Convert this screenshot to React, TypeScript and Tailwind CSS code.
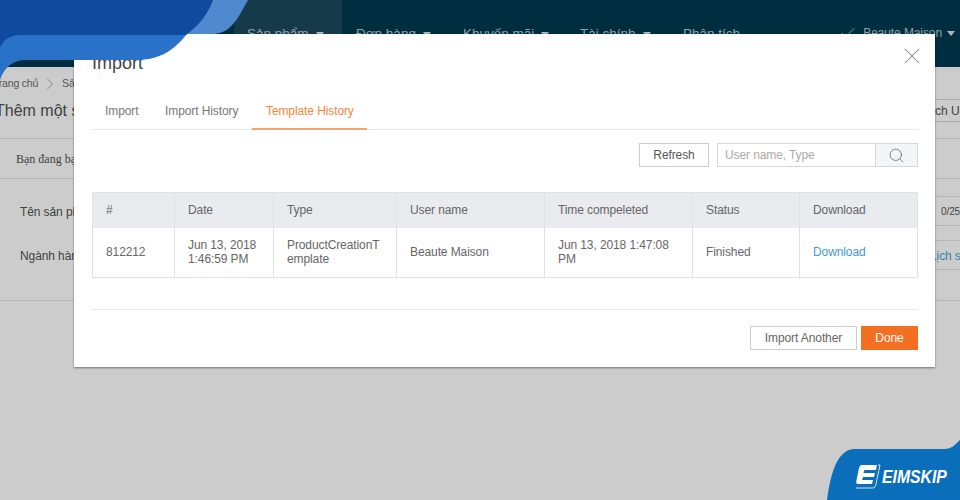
import { Check, ChevronRight, Search, X } from "lucide-react";

const font = { fontFamily: '"Liberation Sans", Arial, sans-serif' };

function NavItem({ label, caret = true, active = false, width }: { label: string; caret?: boolean; active?: boolean; width: string }) {
  return (
    <div className={`flex h-full items-start pt-[26px] text-[13.5px] leading-[15px] text-[#8fa3ad] ${width} ${active ? "bg-[#153a4a] pl-[13px]" : "pl-[14px]"}`}>
      <span>{label}</span>
      {caret && <span className="ml-[7px] mt-[6px] h-0 w-0 border-x-[4px] border-t-[5px] border-x-transparent border-t-[#a9b8bf]" />}
    </div>
  );
}

function BackgroundPage() {
  return (
    <div className="h-[500px] w-[960px] overflow-hidden bg-[#cccccc] text-[#3f3f3f]">
      <div className="flex h-[67px] bg-[#002d40]">
        <div className="w-[234px]" />
        <NavItem label="Sản phẩm" active width="w-[108px]" />
        <NavItem label="Đơn hàng" width="w-[107px]" />
        <NavItem label="Khuyến mãi" width="w-[117px]" />
        <NavItem label="Tài chính" width="w-[103px]" />
        <NavItem label="Phân tích" caret={false} width="w-[76px]" />
        <div className="ml-auto flex items-start pr-[5px] pt-[26px] text-[12px] leading-[15px] tracking-[-0.1px] text-[#8fa3ad]">
          <Check size={18} strokeWidth={1} className="mr-[6px] mt-[-2px] text-[#a9b8bf]" />
          <span>Beaute Maison</span>
          <span className="ml-[5px] mt-[5px] h-0 w-0 border-x-[4px] border-t-[5px] border-x-transparent border-t-[#a9b8bf]" />
        </div>
      </div>

      <div className="flex h-[33px] items-center pt-[1px] text-[10.5px] tracking-[-0.2px] text-[#555]">
        <span className="ml-[-7px]">Trang chủ</span>
        <ChevronRight size={20} strokeWidth={1} className="ml-[2px] mr-[2px] text-[#777]" />
        <span>Sản phẩm</span>
      </div>

      <div className="flex h-[39px] items-start justify-between border-b border-[#b5b5b5]">
        <span className="ml-[-5px] text-[16px] leading-[22px]">Thêm một sản phẩm</span>
        <span className="mr-[-28px] mt-[-1px] flex h-[23px] w-[71px] items-center overflow-hidden whitespace-nowrap border-y border-[#aaa] text-[12px]">Batch Upload</span>
      </div>

      <div className="flex h-[40px] items-center border-b border-[#b5b5b5] pl-[16px] font-['Liberation_Serif'] text-[12px]">
        Bạn đang bạn
      </div>

      <div className="flex h-[122px] flex-col gap-[14px] border-b border-[#b5b5b5] pt-[17px] text-[12px] tracking-[-0.1px]">
        <div className="flex h-[30px] items-center justify-between">
          <span className="mt-[2px] pl-[20px]">Tên sản phẩm</span>
          <span className="flex h-[30px] w-[26px] items-center overflow-hidden border-y border-[#b5b5b5] pl-[7px] text-[10px] text-[#444]">0/25</span>
        </div>
        <div className="flex h-[30px] items-center justify-between">
          <span className="mt-[2px] pl-[20px]">Ngành hàng</span>
          <span className="flex h-[30px] w-[26px] items-center overflow-hidden whitespace-nowrap border-y border-[#b5b5b5] text-[#3d7fa8]">
            <span className="ml-[-4px] mt-[1px]">Lịch sử</span>
          </span>
        </div>
      </div>
    </div>
  );
}

const cols = ["w-[82px]", "w-[99px]", "w-[123px]", "w-[148px]", "w-[148px]", "w-[107px]", "flex-1"];
const heads = ["#", "Date", "Type", "User name", "Time compeleted", "Status", "Download"];
const cells = [
  "812212",
  "Jun 13, 2018 1:46:59 PM",
  "ProductCreationTemplate",
  "Beaute Maison",
  "Jun 13, 2018 1:47:08 PM",
  "Finished",
  "Download",
];

function HistoryTable() {
  return (
    <div className="mt-[25px] border border-[#dfe1e5] text-[12px] leading-[14px] text-[#666]">
      <div className="flex h-[35px] bg-[#e9ebef]">
        {heads.map((h, i) => (
          <div key={h} className={`flex items-center pb-[2px] pl-[13px] ${cols[i]} ${i < 6 ? "border-r border-[#dfe1e5]" : ""}`}>
            {h}
          </div>
        ))}
      </div>
      <div className="flex h-[49px] bg-white">
        {cells.map((c, i) => (
          <div key={i} className={`flex items-center break-all pb-[2px] pl-[13px] pr-[12px] ${cols[i]} ${i < 6 ? "border-r border-[#dfe1e5]" : ""} ${i === 6 ? "text-[#3d9ad1]" : ""}`}>
            <span className={i === 1 || i === 4 ? "break-normal" : ""}>{c}</span>
          </div>
        ))}
      </div>
    </div>
  );
}

function ImportModal() {
  return (
    <div className="absolute left-[74px] top-[34px] h-[333px] w-[861px] bg-white pl-[18px] pr-[17px] tracking-[-0.1px] shadow-[0_1px_2px_rgba(0,0,0,0.45)]">
      <div className="pt-[18px] text-[18px] leading-[22px] tracking-normal text-[#444]">Import</div>
      <X size={28} strokeWidth={0.9} className="absolute right-[9px] top-[8px] text-[#8a8a8a]" />

      <div className="mt-[18px] flex h-[38px] border-b border-[#e8e8e8] text-[12px] text-[#777]">
        <div className="flex h-[38px] w-[60px] items-center pl-[13px]">Import</div>
        <div className="flex h-[38px] w-[100px] items-center pl-[13px]">Import History</div>
        <div className="flex h-[38px] w-[115px] items-center border-b-2 border-[#f9a26c] pl-[14px] pt-[2px] text-[#f5873c]">
          Template History
        </div>
      </div>

      <div className="mt-[13px] flex justify-end text-[12px]">
        <div className="flex h-[24px] w-[70px] items-center justify-center border border-[#ccc] text-[#555]">Refresh</div>
        <div className="ml-[8px] flex h-[24px] w-[201px] items-center border border-[#d5d7db]">
          <span className="flex-1 pl-[7px] text-[#aaa]">User name, Type</span>
          <span className="flex h-full w-[42px] items-center justify-center border-l border-[#d5d7db] bg-[#f3f5f8]">
            <Search size={17} strokeWidth={1} className="text-[#555]" />
          </span>
        </div>
      </div>

      <HistoryTable />

      <div className="mt-[31px] border-t border-[#e8e8e8]" />

      <div className="mt-[16px] flex justify-end gap-[4px] text-[12px]">
        <div className="flex h-[24px] w-[107px] items-center justify-center border border-[#ccc] text-[#666]">Import Another</div>
        <div className="flex h-[24px] w-[57px] items-center justify-center bg-[#f36f21] text-white">Done</div>
      </div>
    </div>
  );
}

function CornerTopLeft() {
  return (
    <svg className="absolute left-0 top-0" width="250" height="82" viewBox="0 0 250 82">
      <path d="M0 0H248C240 14 232 34 213 34H180V0Z" fill="#5189cf" />
      <path d="M0 0H213C207 16 198 26 186 35L150 52H0Z" fill="#0f4a9e" />
      <path d="M0 48C3 40 10 35 20 35H186C174 50 160 60 136 60H26C12 60 4 68 0 80Z" fill="#2a72c8" />
    </svg>
  );
}

function EimskipBadge() {
  return (
    <div className="absolute bottom-0 right-0 h-[60px] w-[133px]">
      <svg className="absolute inset-0" width="133" height="60" viewBox="0 0 133 60">
        <path d="M0 60C3 40 8 9 28 9H118C124 9 128 5 133 0V60Z" fill="#0a6ebb" />
        <path d="M35 25H50L49 30H38C37 30 37 31 36.5 33H48L47 37H36L35 40H46L45 44H31C29 44 29 42 29.5 40L32 28C32.5 26 33.5 25 35 25Z" fill="#fff" />
        <path d="M51 25H53L48.5 46C48 47.5 47 48 45 48H29" fill="none" stroke="#fff" strokeWidth="0.8" />
      </svg>
      <span className="absolute left-[55px] top-[27px] origin-left scale-x-[0.83] whitespace-nowrap text-[19px] font-bold italic leading-[20px] text-white">EIMSKIP</span>
    </div>
  );
}

export default function App() {
  return (
    <div className="relative h-[500px] w-[960px] overflow-hidden" style={font}>
      <BackgroundPage />
      <ImportModal />
      <CornerTopLeft />
      <EimskipBadge />
    </div>
  );
}
